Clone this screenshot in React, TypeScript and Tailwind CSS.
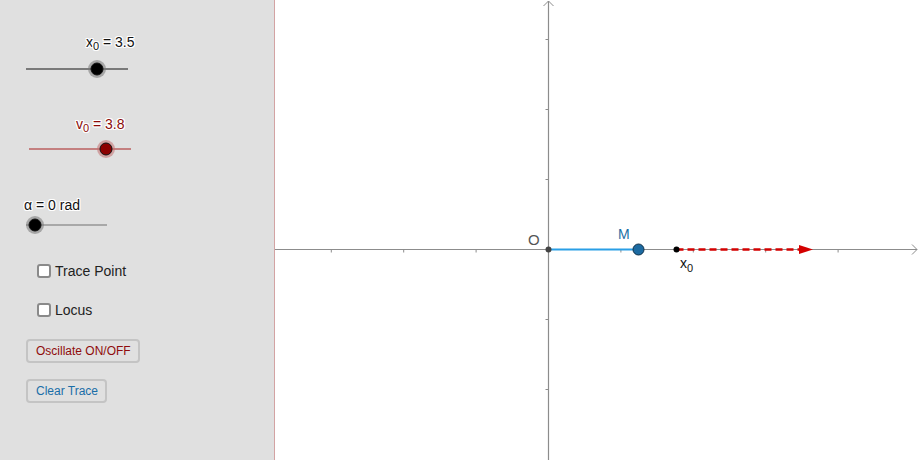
import React from "react";

const halo =
  "[text-shadow:-1px_-1px_0_#fff,1px_-1px_0_#fff,-1px_1px_0_#fff,1px_1px_0_#fff,0_1px_0_#fff,0_-1px_0_#fff,1px_0_0_#fff,-1px_0_0_#fff]";

function Slider({
  x1,
  x2,
  knob,
  track,
  fill,
  ring,
}: {
  x1: number;
  x2: number;
  knob: number;
  track: string;
  fill: string;
  ring: string;
}) {
  return (
    <svg width="160" height="22" className="block">
      <line x1={x1} y1="11" x2={x2} y2="11" stroke={track} strokeWidth="2" />
      <circle cx={knob} cy="11" r="9" fill={ring} opacity="0.55" />
      <circle cx={knob} cy="11" r="6" fill={fill} stroke="#111" strokeWidth="1" />
    </svg>
  );
}

function Check({ label }: { label: string }) {
  return (
    <div className="flex items-center gap-[4px]">
      <span className="w-[14px] h-[14px] rounded-[3px] border-2 border-[#8a8a8a] bg-white" />
      <span className="text-[14px] leading-[16px] text-[#222]">{label}</span>
    </div>
  );
}

function Graph() {
  const ox = 273.5;
  const oy = 249.5;
  const xt = [-3, -2, -1, 1, 2, 3, 4].map((k) => ox + 72.4 * k);
  const yt = [-3, -2, -1, 1, 2].map((k) => oy + 70 * k);
  const mx = 363.5;
  const px = 401.5;
  return (
    <svg width="644" height="460" className="block">
      <line x1="0" y1={oy} x2="642" y2={oy} stroke="#8c8c8c" strokeWidth="1.2" />
      <polyline points={`637,${oy - 5} 642,${oy} 637,${oy + 5}`} fill="none" stroke="#8c8c8c" strokeWidth="1" />
      <line x1={ox} y1="1" x2={ox} y2="460" stroke="#8c8c8c" strokeWidth="1.2" />
      <polyline points={`${ox - 5},6 ${ox},1 ${ox + 5},6`} fill="none" stroke="#8c8c8c" strokeWidth="1" />
      {xt.map((t) => (
        <line key={t} x1={t} y1={oy} x2={t} y2={oy + 3} stroke="#8c8c8c" strokeWidth="1" />
      ))}
      {yt.map((t) => (
        <line key={t} x1={ox - 3} y1={t} x2={ox} y2={t} stroke="#8c8c8c" strokeWidth="1" />
      ))}
      <line x1={ox} y1={oy} x2={mx} y2={oy} stroke="#2a9fe6" strokeWidth="2" />
      <line
        x1={px}
        y1={oy}
        x2="526"
        y2={oy}
        stroke="#d40000"
        strokeWidth="2.5"
        strokeDasharray="7 4"
      />
      <polygon points={`524,${oy - 4.5} 538,${oy} 524,${oy + 4.5}`} fill="#d40000" />
      <circle cx={ox} cy={oy} r="3" fill="#444" />
      <circle cx={px} cy={oy} r="3" fill="#000" />
      <circle cx={mx} cy={oy} r="5.5" fill="#1c6aa1" stroke="#0f2f47" strokeWidth="1" />
      <text x="253" y="245" fontSize="15" fill="#555" fontFamily="Liberation Sans, Arial, sans-serif">
        O
      </text>
      <text x="343" y="239" fontSize="14" fill="#1b6fa6" fontFamily="Liberation Sans, Arial, sans-serif">
        M
      </text>
      <text x="405" y="268" fontSize="14" fill="#111" fontFamily="Liberation Sans, Arial, sans-serif">
        x
        <tspan fontSize="11" dy="4">
          0
        </tspan>
      </text>
    </svg>
  );
}

export default function App() {
  return (
    <div className="w-[919px] h-[460px] flex overflow-hidden bg-white font-['Liberation_Sans',Arial,sans-serif]">
      <div className="w-[275px] h-full shrink-0 bg-[#e0e0e0] border-r border-[#d3a3a3] flex flex-col">
        <div className={`mt-[34px] ml-[86px] text-[14px] leading-[16px] text-[#111] ${halo}`}>
          x<sub className="text-[11px] relative top-[3px]">0</sub> = 3.5
        </div>
        <div className="mt-[8px] ml-[17px]">
          <Slider x1={9} x2={111} knob={80} track="#7a7a7a" fill="#000" ring="#777" />
        </div>

        <div className={`mt-[36px] ml-[76px] text-[14px] leading-[16px] text-[#8b0a0a] ${halo}`}>
          v<sub className="text-[11px] relative top-[3px]">0</sub> = 3.8
        </div>
        <div className="mt-[6px] ml-[20px]">
          <Slider x1={9} x2={111} knob={86} track="#c48080" fill="#8b0000" ring="#c27070" />
        </div>

        <div className={`mt-[37px] ml-[24px] text-[14px] leading-[16px] text-[#111] ${halo}`}>
          α = 0 rad
        </div>
        <div className="mt-[1px] ml-[17px]">
          <Slider x1={9} x2={90} knob={18} track="#a8a8a8" fill="#000" ring="#777" />
        </div>

        <div className="mt-[27px] ml-[37px] flex flex-col gap-[23px]">
          <Check label="Trace Point" />
          <Check label="Locus" />
        </div>

        <div className="mt-[21px] ml-[26px] flex flex-col items-start gap-[16px]">
          <button className="h-[24px] pl-[8px] pr-[7px] rounded-[4px] border-2 border-[#c4c4c4] bg-[#e0e0e0] text-[12px] leading-[14px] text-[#8f0c0c]">
            Oscillate ON/OFF
          </button>
          <button className="h-[24px] pl-[8px] pr-[7px] rounded-[4px] border-2 border-[#c4c4c4] bg-[#e0e0e0] text-[12px] leading-[14px] text-[#1a6ea8]">
            Clear Trace
          </button>
        </div>
      </div>
      <Graph />
    </div>
  );
}
